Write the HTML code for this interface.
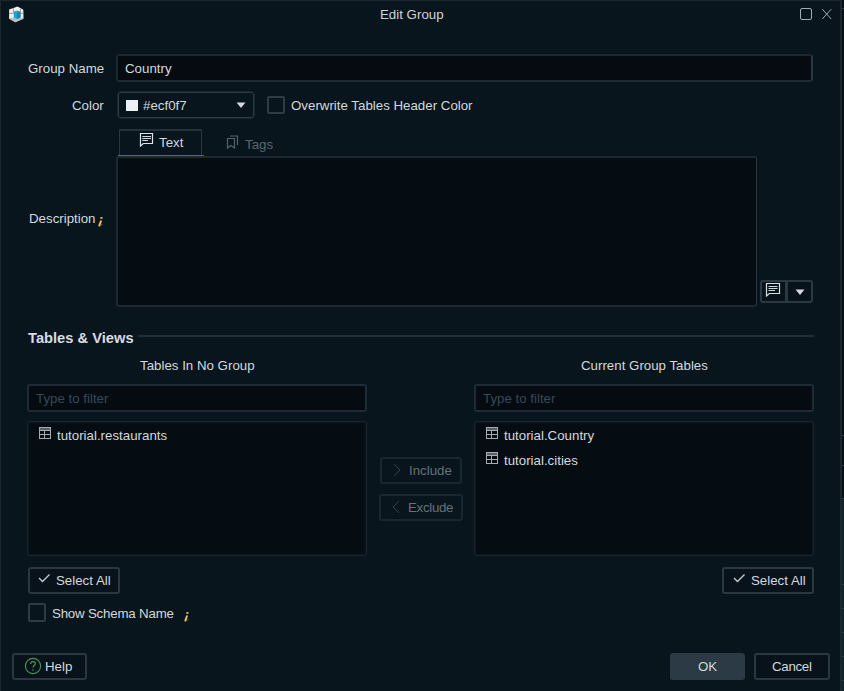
<!DOCTYPE html>
<html><head><meta charset="utf-8">
<style>
*{box-sizing:border-box;margin:0;padding:0}
html,body{width:844px;height:691px;overflow:hidden;background:#071016}
body{position:relative;font-family:"Liberation Sans",sans-serif;font-size:13.3px;color:#d3d9de}
.a{position:absolute}
.t{position:absolute;white-space:nowrap;line-height:16px}
.inp{position:absolute;background:#050b10;border:2px solid #1d2830;border-radius:3px}
.in2{position:absolute;background:#050b10;border:1px solid #111c24;box-shadow:inset 0 0 0 1px #25323b;border-radius:4px}
.btn{position:absolute;border:2px solid #2b3842;border-radius:3px;background:#08121a}
.chk{position:absolute;border:2px solid #2f3b45;border-radius:2px;width:19px;height:19px}
.ph{color:#36495a}
.dis{color:#65727a}
</style></head><body>
<!-- window -->
<div class="a" style="left:0;top:0;width:842px;height:691px;background:#08151d;border-top:1px solid #1b262e;border-left:1px solid #1b262e;border-right:2px solid #1b262e"></div>
<div class="a" style="left:842px;top:498px;width:2px;height:193px;background:#14222a"></div><div class="a" style="left:842px;top:8px;width:2px;height:1px;background:#2e3d47"></div><div class="a" style="left:842px;top:435px;width:2px;height:1px;background:#2e3d47"></div><div class="a" style="left:842px;top:465px;width:2px;height:1px;background:#2e3d47"></div><div class="a" style="left:842px;top:498px;width:2px;height:1px;background:#2e3d47"></div><div class="a" style="left:842px;top:584px;width:2px;height:1px;background:#2e3d47"></div><div class="a" style="left:842px;top:608px;width:2px;height:1px;background:#2e3d47"></div><div class="a" style="left:842px;top:632px;width:2px;height:1px;background:#2e3d47"></div><div class="a" style="left:842px;top:656px;width:2px;height:1px;background:#2e3d47"></div><div class="a" style="left:842px;top:680px;width:2px;height:1px;background:#2e3d47"></div>

<!-- title bar -->
<svg class="a" style="left:8px;top:5px" width="18" height="19" viewBox="0 0 18 19">
  <polygon points="9.6,1.4 15.3,4.7 15.5,13.8 7.3,17.3 1.1,13.8 1.1,4.6" fill="#eef0f2"/>
  <polygon points="1.1,13.2 7.3,17.3 15.5,13.2 9,12.2" fill="#b9bcbf"/>
  <polygon points="5.8,7 9.3,6 12.5,7 12.5,12.6 9,13.9 5.8,12.6" fill="#1ea3d4"/>
  <polygon points="9.3,7.6 12.5,7 12.5,12.6 9,13.9" fill="#1685b4"/>
  <path d="M5.8 7L9.3 6L12.5 7" stroke="#2a8a7a" stroke-width="0.7" fill="none"/>
  <path d="M5.4 3.2V7.4 M12.5 3.8V7.2 M1.1 8.4H5.8 M12.5 8.4H15.4" stroke="#8a9296" stroke-width="0.9" fill="none"/>
</svg>
<div class="t" style="left:380px;top:7px;color:#cdd4d9">Edit Group</div>
<div class="a" style="left:800px;top:8px;width:12px;height:12px;border:1px solid #a2abb0;border-radius:2px"></div>
<svg class="a" style="left:822px;top:8px" width="10" height="12" viewBox="0 0 10 12"><path d="M0.3 1.2L9.2 11M9.2 1.2L0.3 11" stroke="#a2abb0" stroke-width="1"/></svg>

<!-- Group name -->
<div class="t" style="left:28px;top:61px">Group Name</div>
<div class="inp" style="left:116px;top:54px;width:697px;height:28px;border-color:#1c2730 #2b3841 #1f2a33 #1c2730"></div>
<div class="t" style="left:125px;top:61px">Country</div>

<!-- Color -->
<div class="t" style="left:72px;top:98px">Color</div>
<div class="in2" style="left:117px;top:91px;width:138px;height:28px;border-color:#1a252d;box-shadow:inset 0 0 0 1px #2e3b45;background:transparent"></div>
<div class="a" style="left:126px;top:100px;width:12px;height:11px;background:#ecf0f7"></div>
<div class="t" style="left:143px;top:98px">#ecf0f7</div>
<svg class="a" style="left:236px;top:102px" width="10" height="7" viewBox="0 0 10 7"><path d="M0.5 0.5H9.5L5 6Z" fill="#d3d9de"/></svg>
<div class="chk" style="left:267px;top:96px;width:18px;height:18px"></div>
<div class="t" style="left:291px;top:98px">Overwrite Tables Header Color</div>

<!-- tabs -->
<div class="a" style="left:119px;top:129px;width:83px;height:27px;border:1px solid #2a3740;border-top:2px solid #253139;border-bottom:none"></div>
<div class="a" style="left:118px;top:155px;width:86px;height:1px;background:#5b59a8"></div><div class="a" style="left:118px;top:156px;width:86px;height:2px;background:#6e6cc0"></div>
<svg class="a" style="left:139px;top:132px" width="15" height="15" viewBox="0 0 15 15"><path d="M1.5 1.5H13.5V11.5H4.3L1.5 14Z" fill="none" stroke="#dfe4e8" stroke-width="1.2" stroke-linejoin="miter"/><path d="M3.3 4.5H12M3.3 6.5H12M3.3 8.5H9" stroke="#d6dce0" stroke-width="1.1"/></svg>
<div class="t" style="left:159px;top:135px">Text</div>
<svg class="a" style="left:226px;top:135px" width="13" height="14" viewBox="0 0 13 14"><path d="M1.5 3.5H8.5V13L5 10.5L1.5 13Z M4 1H11.5V10" fill="none" stroke="#56626b" stroke-width="1.2"/></svg>
<div class="t dis" style="left:245px;top:137px;color:#5a666f">Tags</div>

<!-- description -->
<div class="t" style="left:29px;top:211px">Description</div>
<svg class="a" style="left:97px;top:216px" width="8" height="12" viewBox="0 0 8 12"><ellipse cx="4.4" cy="1.9" rx="1.3" ry="0.95" fill="#eec464"/><path d="M3.9 5.2L2.3 9.6" stroke="#eec464" stroke-width="1.9" stroke-linecap="round"/><path d="M2.6 10.2L5.6 8.4" stroke="#7d6d48" stroke-width="0.8"/></svg>
<div class="inp" style="left:116px;top:156px;width:641px;height:151px;border-width:2px 1px 2px 2px;border-color:#1d2830 #2a3740 #1d2830 #1d2830;border-radius:3px 2px 3px 3px;background:#050c12"></div>
<div class="btn" style="left:760px;top:280px;width:27px;height:23px;border-color:#2c3943;border-radius:3px 0 0 3px"></div>
<div class="btn" style="left:786px;top:280px;width:27px;height:23px;border-color:#2c3943;border-radius:0 3px 3px 0"></div>
<svg class="a" style="left:765px;top:282px" width="16" height="15" viewBox="0 0 16 15"><path d="M1.5 1.5H14.5V11.5H4.3L1.5 14Z" fill="none" stroke="#d6dce0" stroke-width="1.2"/><path d="M3.5 4.5H12.5M3.5 6.5H12.5M3.5 8.5H10" stroke="#cfd6db" stroke-width="1.1"/></svg>
<svg class="a" style="left:795px;top:289px" width="10" height="7" viewBox="0 0 10 7"><path d="M0.5 0.5H9.5L5 6Z" fill="#d3d9de"/></svg>

<!-- Tables & views -->
<div class="t" style="left:28px;top:329px;font-weight:bold;font-size:14.7px;line-height:18px;color:#d7dde2">Tables &amp; Views</div>
<div class="a" style="left:138px;top:335px;width:676px;height:2px;background:#232f38"></div>
<div class="t" style="left:140px;top:358px">Tables In No Group</div>
<div class="t" style="left:581px;top:358px">Current Group Tables</div>

<div class="inp" style="left:27px;top:384px;width:340px;height:28px;border-color:#1f2b34"></div>
<div class="t ph" style="left:36px;top:391px">Type to filter</div>
<div class="inp" style="left:474px;top:384px;width:340px;height:28px;border-color:#1f2b34"></div>
<div class="t ph" style="left:483px;top:391px">Type to filter</div>

<div class="inp" style="left:27px;top:421px;width:340px;height:135px;border-width:1px;border-color:#17242c;box-shadow:inset 0 0 0 1px #0c171d;border-radius:2px;background:#060d12"></div>
<div class="inp" style="left:474px;top:421px;width:340px;height:135px;border-width:1px;border-color:#17242c;box-shadow:inset 0 0 0 1px #0c171d;border-radius:2px;background:#060d12"></div>

<!-- table icons -->
<svg class="a" style="left:39px;top:427px" width="12" height="12" viewBox="0 0 12 12" shape-rendering="crispEdges"><rect x="1" y="1" width="10" height="2" fill="#596167"/><path d="M0.5 0.5H11.5V11.5H0.5Z M0.5 3.5H11.5 M0.5 7.5H11.5 M5.5 3.5V11.5" fill="none" stroke="#a4acb2" stroke-width="1"/></svg>
<div class="t" style="left:57px;top:428px">tutorial.restaurants</div>
<svg class="a" style="left:486px;top:427px" width="12" height="12" viewBox="0 0 12 12" shape-rendering="crispEdges"><rect x="1" y="1" width="10" height="2" fill="#596167"/><path d="M0.5 0.5H11.5V11.5H0.5Z M0.5 3.5H11.5 M0.5 7.5H11.5 M5.5 3.5V11.5" fill="none" stroke="#a4acb2" stroke-width="1"/></svg>
<div class="t" style="left:504px;top:428px">tutorial.Country</div>
<svg class="a" style="left:486px;top:452px" width="12" height="12" viewBox="0 0 12 12" shape-rendering="crispEdges"><rect x="1" y="1" width="10" height="2" fill="#596167"/><path d="M0.5 0.5H11.5V11.5H0.5Z M0.5 3.5H11.5 M0.5 7.5H11.5 M5.5 3.5V11.5" fill="none" stroke="#a4acb2" stroke-width="1"/></svg>
<div class="t" style="left:504px;top:453px">tutorial.cities</div>

<!-- include/exclude -->
<div class="btn" style="left:380px;top:457px;width:82px;height:27px;border-color:#1b262e;background:transparent"></div>
<svg class="a" style="left:393px;top:463px" width="8" height="14" viewBox="0 0 8 14"><path d="M1 1.2L7 7L1 12.8" fill="none" stroke="#36434c" stroke-width="1"/></svg>
<div class="t dis" style="left:409px;top:463px">Include</div>
<div class="btn" style="left:379px;top:494px;width:84px;height:27px;border-color:#1b262e;background:transparent"></div>
<svg class="a" style="left:392px;top:500px" width="8" height="14" viewBox="0 0 8 14"><path d="M7 1.2L1 7L7 12.8" fill="none" stroke="#36434c" stroke-width="1"/></svg>
<div class="t dis" style="left:408px;top:500px;letter-spacing:-0.3px">Exclude</div>

<!-- select all -->
<div class="btn" style="left:28px;top:567px;width:92px;height:27px"></div>
<svg class="a" style="left:38px;top:573px" width="13" height="10" viewBox="0 0 13 10"><path d="M1 5L4.5 8.5L11.5 1.5" fill="none" stroke="#c3cbd1" stroke-width="1.35"/></svg>
<div class="t" style="left:56px;top:573px">Select All</div>
<div class="btn" style="left:722px;top:567px;width:92px;height:27px"></div>
<svg class="a" style="left:733px;top:573px" width="13" height="10" viewBox="0 0 13 10"><path d="M1 5L4.5 8.5L11.5 1.5" fill="none" stroke="#c3cbd1" stroke-width="1.35"/></svg>
<div class="t" style="left:751px;top:573px">Select All</div>

<div class="chk" style="left:28px;top:603px;width:18px;height:19px"></div>
<div class="t" style="left:52px;top:606px;letter-spacing:-0.2px">Show Schema Name</div>
<svg class="a" style="left:183px;top:611px" width="8" height="12" viewBox="0 0 8 12"><ellipse cx="4.4" cy="1.9" rx="1.3" ry="0.95" fill="#eec464"/><path d="M3.9 5.2L2.3 9.6" stroke="#eec464" stroke-width="1.9" stroke-linecap="round"/><path d="M2.6 10.2L5.6 8.4" stroke="#7d6d48" stroke-width="0.8"/></svg>

<!-- bottom buttons -->
<div class="btn" style="left:12px;top:653px;width:75px;height:27px"></div>
<svg class="a" style="left:24px;top:657px" width="18" height="18" viewBox="0 0 18 18"><circle cx="9" cy="9" r="7.6" fill="none" stroke="#4b9455" stroke-width="1.1"/><path d="M6.6 7C6.6 5.4 7.7 4.6 9 4.6C10.4 4.6 11.4 5.5 11.4 6.7C11.4 8.2 9 8.5 9 10.6" fill="none" stroke="#4b9455" stroke-width="1.2"/><circle cx="9" cy="13" r="0.8" fill="#4b9455"/></svg>
<div class="t" style="left:45px;top:659px">Help</div>
<div class="btn" style="left:670px;top:653px;width:75px;height:27px;background:#2b3a45;border-color:#2b3a45"></div>
<div class="t" style="left:698px;top:659px">OK</div>
<div class="btn" style="left:754px;top:653px;width:76px;height:27px"></div>
<div class="t" style="left:772px;top:659px;letter-spacing:-0.3px">Cancel</div>
</body></html>
